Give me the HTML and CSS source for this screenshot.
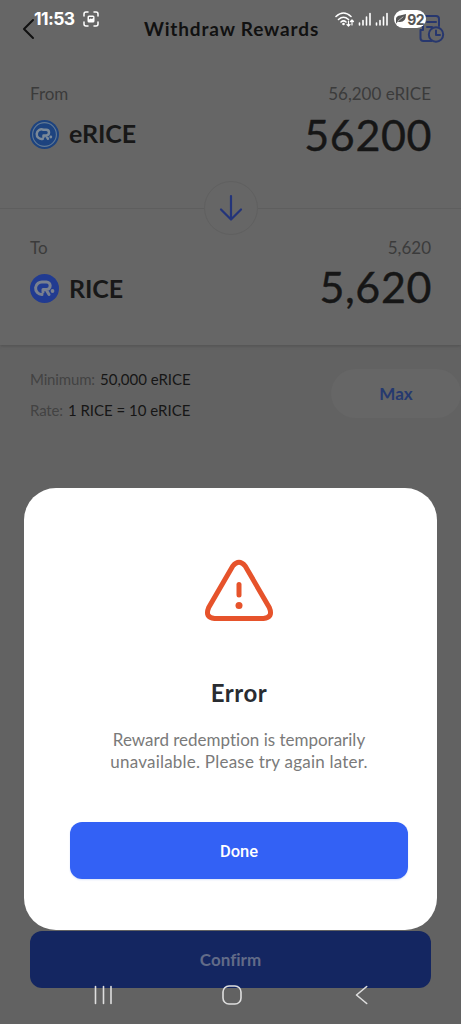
FILE: index.html
```html
<!DOCTYPE html>
<html lang="en">
<head>
<meta charset="utf-8">
<title>Withdraw Rewards</title>
<link rel="stylesheet" href="styles.css">
</head>
<body>
<div class="screen">
  <main class="page">
    <section class="exchange">
      <header class="header">
        <svg class="back" width="16" height="24" viewBox="0 0 16 24"><path d="M12 3L3 12L12 21"/></svg>
        <h1 class="title">Withdraw Rewards</h1>
        <svg class="history" width="28" height="30" viewBox="0 0 28 30"><path d="M6 16V5q0-3 3-3h10q3 0 3 3v7M10 8h9M10 13h5M6 16H3.500v8q0 3 3 3h8"/><circle cx="19" cy="20.500" r="7.200"/><path d="M19 16.500v4.500h4"/></svg>
      </header>
      <div class="side from">
        <div class="caption"><span>From</span><span>56,200 eRICE</span></div>
        <div class="amount-row">
          <svg class="coin" width="29" height="29" viewBox="0 0 29 29"><circle cx="14.500" cy="14.500" r="14.500" fill="#1d437f"/><circle cx="14.500" cy="14.500" r="11.900" fill="none" stroke="#627993" stroke-width="1.100"/><path d="M12.800 18.800A4.800 4.800 0 1 1 13.500 9.800H16.200A2.800 2.800 0 0 1 16.200 15.400H13.500V17M16 15.500L18 18.800" fill="none" stroke="#7b8998" stroke-width="2.500"/><circle cx="20.800" cy="17" r="1.400" fill="#7b8998"/></svg>
          <span class="symbol">eRICE</span>
          <span class="amount">56200</span>
        </div>
      </div>
      <div class="divider"><span class="swap"><svg width="26" height="28" viewBox="0 0 26 28"><path d="M13 2V25M3 15.500L13 25.500L23 15.500"/></svg></span></div>
      <div class="side to">
        <div class="caption"><span>To</span><span>5,620</span></div>
        <div class="amount-row">
          <svg class="coin" width="29" height="29" viewBox="0 0 29 29"><circle cx="14.500" cy="14.500" r="14.500" fill="#213b91"/><path d="M12 20.500A6.300 6.300 0 1 1 13 8H16.500A3.700 3.700 0 0 1 16.500 15.400H13V18M16 15.500L19 20.500" fill="none" stroke="#79808f" stroke-width="3"/><circle cx="22.500" cy="17" r="1.900" fill="#79808f"/></svg>
          <span class="symbol">RICE</span>
          <span class="amount">5,620</span>
        </div>
      </div>
    </section>
    <section class="info">
      <div class="facts">
        <p><span class="label">Minimum:</span><span class="value">50,000 eRICE</span></p>
        <p><span class="label">Rate:</span><span class="value">1 RICE = 10 eRICE</span></p>
      </div>
      <button class="max">Max</button>
    </section>
    <button class="confirm">Confirm</button>
  </main>

  <section class="modal">
    <svg class="warning" width="70" height="64" viewBox="0 0 70 64"><path d="M28.800 7Q35 -.5 41.200 7L65.300 48.500Q69.500 58.500 59.500 59.500H10.500Q.5 58.500 4.700 48.500Z"/><path d="M35 25.500V36"/><circle cx="35" cy="46.500" r="3.500"/></svg>
    <h2>Error</h2>
    <p class="message">Reward redemption is temporarily<br><span class="line-two">unavailable. Please try again later.</span></p>
    <button class="done">Done</button>
  </section>

  <div class="status">
    <span class="time">11:53</span>
    <svg class="capture" width="16" height="16" viewBox="0 0 16 16"><path d="M1 5V3q0-2 2-2h2M11 1h2q2 0 2 2v2M15 11v2q0 2-2 2h-2M5 15H3q-2 0-2-2v-2"/><path d="M6 4.500h4q1.500 0 1.500 1.500v4q0 1.500-1.500 1.500H6q-1.500 0-1.500-1.500V6q0-1.500 1.500-1.500zM6 6v2.500l1.500-1 1.500.5 1.200-1V6z" fill="#fff" fill-rule="evenodd" stroke="none"/></svg>
    <svg class="signals" width="54" height="16" viewBox="0 0 54 16"><path d="M1 5.500Q8.500-1.500 16 5.500M3.500 8.500Q8.500 4 13.500 8.500M6 11Q8.500 8.800 11 11"/><circle cx="8.500" cy="13" r="1.300" fill="#fff" stroke="none"/><path stroke-width="1.200" d="M13.500 10V15M12 13.500L13.500 15L15 13.500M17 14V9M15.500 10.500L17 9L18.500 10.500"/><path d="M24.500 14V12M28 14V9.500M31.500 14V6M35 14V2.500M41.500 14V12M45 14V9.500M48.500 14V6M52 14V2.500"/></svg>
    <span class="battery"><svg width="10" height="10" viewBox="0 0 10 10"><path d="M0 8Q-1 2 4 1.500L10 0Q10 8 4 8Q2.500 8 2 7.500L0 9.500Z" fill="#555"/><path d="M2 7L7 3" stroke="#ddd" stroke-width=".7"/></svg><b>92</b></span>
  </div>

  <nav class="system-nav">
    <svg width="20" height="20" viewBox="0 0 20 20"><path d="M2.500 1.500V18.500M10.500 1.500V18.500M18 1.500V18.500"/></svg>
    <svg width="20" height="20" viewBox="0 0 20 20"><rect x="1" y="1" width="18" height="18" rx="6"/></svg>
    <svg width="20" height="20" viewBox="0 0 20 20"><path d="M15.700 1.500L5.500 10L15.700 18.500"/></svg>
  </nav>
</div>
</body>
</html>
```
FILE: styles.css
```css
* { box-sizing: border-box; }
body { margin: 0; font-family: Lato, "Liberation Sans", sans-serif; font-variant-ligatures: none; }
h1, h2, p { margin: 0; }
button { border: 0; padding: 0; font-family: inherit; font-variant-ligatures: none; }
svg { display: block; flex: none; fill: none; stroke-linecap: round; stroke-linejoin: round; }
.screen { position: relative; width: 461px; height: 1024px; overflow: hidden; background: #626262; }
.page { display: flex; flex-direction: column; height: 1024px; padding-bottom: 36px; }
.exchange { height: 345px; background: #666; box-shadow: 0 1px 3px #505050; }
.header { display: flex; align-items: center; justify-content: space-between; height: 60px; padding: 0 16px 3px 21px; }
.back { stroke: #111; stroke-width: 2; }
.title { font-size: 19px; font-weight: 700; color: #111; letter-spacing: .85px; margin-left: 9px; white-space: nowrap; }
.history { stroke: #27376e; stroke-width: 2; }
.side { padding: 0 30px; }
.from { padding-top: 22px; height: 148px; }
.caption { display: flex; justify-content: space-between; height: 24px; line-height: 24px; font-size: 17px; color: #3b3b3b; }
.amount-row { display: flex; align-items: center; height: 56px; }
.symbol { margin-left: 10px; padding-bottom: 2px; font-size: 25px; font-weight: 700; color: #181818; letter-spacing: -.1px; }
.amount { margin-left: auto; margin-right: -1px; font-size: 43px; color: #161616; letter-spacing: .6px; -webkit-text-stroke: .4px #161616; }
.divider { display: flex; align-items: center; justify-content: center; height: 1px; background: #5e5e5e; }
.swap { display: flex; align-items: center; justify-content: center; flex: none; width: 54px; height: 54px; margin-top: -1px; border: 1px solid #606060; border-radius: 50%; background: #666; }
.swap svg { stroke: #23347a; stroke-width: 2.200; }
.to { padding-top: 27px; }
.to .amount { padding-bottom: 4px; }
.to .amount-row { height: 57px; }
.info { display: flex; justify-content: space-between; padding: 24px 0 0 30px; }
.facts p { height: 30.500px; line-height: 21px; font-size: 15px; white-space: nowrap; }
.label { color: #434343; margin-right: 5px; letter-spacing: -.15px; }
.value { color: #161616; }
.max { width: 130px; height: 49px; border-radius: 25px; background: #666; color: #25396f; font-size: 17px; font-weight: 700; }
.confirm { height: 57px; margin: auto 30px 0; border-radius: 12px; background: #142661; color: #626b88; font-size: 17px; font-weight: 700; letter-spacing: 0; }
.modal { position: absolute; left: 24px; top: 488px; width: 413px; height: 442px; padding: 70px 29px 0 46px; display: flex; flex-direction: column; align-items: center; border-radius: 32px; background: #fff; }
.warning { stroke: #e6532b; stroke-width: 5; margin-top: 1px; }
.warning circle { fill: #e6532b; stroke: none; }
.modal h2 { height: 36px; margin-top: 52px; line-height: 36px; font-size: 24px; color: #292c31; letter-spacing: .5px; }
.message { height: 44px; margin-top: 18px; line-height: 22px; font-size: 17px; text-align: center; color: #7a7a7a; white-space: nowrap; }
.line-two { letter-spacing: .22px; }
.done { width: 338px; height: 57px; margin-top: 49px; padding-top: 2px; border-radius: 12px; background: #3361f5; color: #fff; font-family: Roboto, sans-serif; font-size: 16.500px; font-weight: 500; box-shadow: 0 1px 2px #dce4f8; }
.status { position: absolute; top: 8px; left: 34px; right: 35px; height: 22px; display: flex; align-items: center; }
.time { font-family: Inter, sans-serif; font-size: 17.500px; font-weight: 700; line-height: 22px; width: 42px; color: #fff; letter-spacing: -.6px; }
.capture { margin-left: 7px; stroke: #fff; stroke-width: 1.500; }
.signals { margin-left: auto; margin-right: 5px; stroke: #fff; stroke-width: 1.600; }
.battery { display: flex; align-items: center; justify-content: center; gap: 1px; width: 32px; height: 18px; border-radius: 9px; background: #fff; }
.battery b { font: 700 14px Inter, sans-serif; color: #555; letter-spacing: -.8px; }
.system-nav { position: absolute; left: 93px; right: 90px; top: 985px; display: flex; justify-content: space-between; }
.system-nav svg { stroke: #dedede; stroke-width: 1.600; }
```
